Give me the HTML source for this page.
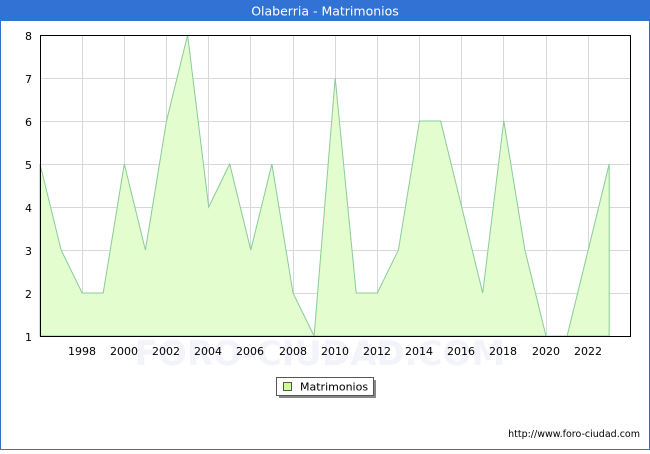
<!DOCTYPE html>
<html><head><style>
body{margin:0;width:650px;height:450px;overflow:hidden;background:#fff;font-family:"DejaVu Sans","Liberation Sans",sans-serif;}
</style></head><body>
<svg width="650" height="450" xmlns="http://www.w3.org/2000/svg" font-family="DejaVu Sans, Liberation Sans, sans-serif">
<rect x="0" y="0" width="650" height="450" fill="#fff"/>
<rect x="0.5" y="0.5" width="649" height="449" fill="none" stroke="#3272d4" stroke-width="1"/>
<rect x="0" y="0" width="650" height="21" fill="#3272d4"/>
<text x="325" y="15.5" fill="#fff" font-size="12.5" text-anchor="middle">Olaberria - Matrimonios</text>
<text x="320" y="365" fill="#f3f3fb" font-size="34" text-anchor="middle" font-weight="bold">FORO-CIUDAD.COM</text>
<g stroke="#d8d8d8" stroke-width="1">
<line x1="40" y1="78.5" x2="630" y2="78.5"/><line x1="40" y1="121.5" x2="630" y2="121.5"/><line x1="40" y1="164.5" x2="630" y2="164.5"/><line x1="40" y1="207.5" x2="630" y2="207.5"/><line x1="40" y1="250.5" x2="630" y2="250.5"/><line x1="40" y1="293.5" x2="630" y2="293.5"/>
<line x1="82.5" y1="35" x2="82.5" y2="336"/><line x1="124.5" y1="35" x2="124.5" y2="336"/><line x1="166.5" y1="35" x2="166.5" y2="336"/><line x1="208.5" y1="35" x2="208.5" y2="336"/><line x1="250.5" y1="35" x2="250.5" y2="336"/><line x1="293.5" y1="35" x2="293.5" y2="336"/><line x1="335.5" y1="35" x2="335.5" y2="336"/><line x1="377.5" y1="35" x2="377.5" y2="336"/><line x1="419.5" y1="35" x2="419.5" y2="336"/><line x1="461.5" y1="35" x2="461.5" y2="336"/><line x1="503.5" y1="35" x2="503.5" y2="336"/><line x1="546.5" y1="35" x2="546.5" y2="336"/><line x1="588.5" y1="35" x2="588.5" y2="336"/>
</g>
<polygon fill="#e4fdcf" stroke="#88cc99" stroke-width="1" points="40,336 40,164 61.1,250 82.2,293 103.2,293 124.3,164 145.4,250 166.5,121 187.6,35 208.7,207 229.7,164 250.8,250 271.9,164 293,293 314.1,336 335.2,78 356.2,293 377.3,293 398.4,250 419.5,121 440.6,121 461.7,207 482.7,293 503.8,121 524.9,250 546,336 567.1,336 588.2,250 609.2,164 609.2,336"/>
<rect x="40.5" y="35.5" width="590" height="301" fill="none" stroke="#000" stroke-width="1"/>
<g font-size="11" fill="#000" text-anchor="end">
<text x="32" y="40">8</text><text x="32" y="83">7</text><text x="32" y="126">6</text><text x="32" y="169">5</text><text x="32" y="212">4</text><text x="32" y="255">3</text><text x="32" y="298">2</text><text x="32" y="341">1</text>
</g>
<g font-size="11" fill="#000" text-anchor="middle">
<text x="82" y="355">1998</text><text x="124" y="355">2000</text><text x="166" y="355">2002</text><text x="208" y="355">2004</text><text x="250" y="355">2006</text><text x="293" y="355">2008</text><text x="335" y="355">2010</text><text x="377" y="355">2012</text><text x="419" y="355">2014</text><text x="461" y="355">2016</text><text x="503" y="355">2018</text><text x="546" y="355">2020</text><text x="588" y="355">2022</text>
</g>
<rect x="279" y="380" width="97" height="18" fill="#888"/>
<rect x="276.5" y="377.5" width="97" height="18" fill="#fff" stroke="#555"/>
<rect x="283.5" y="382.5" width="8" height="8" fill="#ccff99" stroke="#555"/>
<text x="300" y="390.5" font-size="11" fill="#000">Matrimonios</text>
<text x="640" y="437" font-size="9.5" fill="#000" text-anchor="end">http://www.foro-ciudad.com</text>
</svg>
</body></html>
